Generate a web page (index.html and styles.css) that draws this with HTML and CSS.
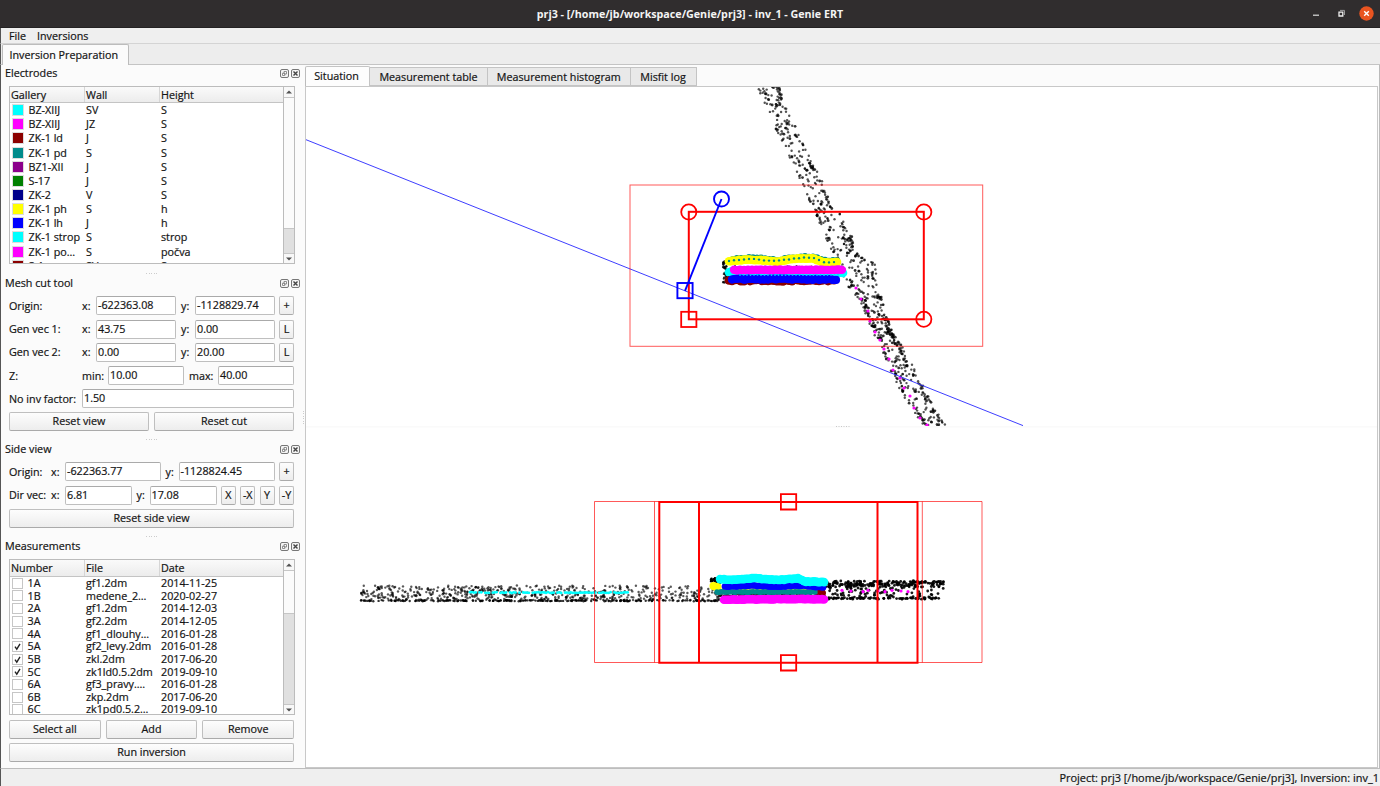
FILE: index.html
```html
<!DOCTYPE html>
<html lang="en">
<head>
<meta charset="utf-8">
<title>Genie ERT</title>
<link rel="stylesheet" href="styles.css">
</head>
<body>
<svg class="defs" width="0" height="0">
  <symbol id="float" viewBox="0 0 9 9"><rect x=".5" y=".5" width="8" height="8" rx="1.5" fill="#f4f4f4" stroke="#777"/><path d="M4 2.5h2.5V5H4zM2.5 4.2h2.3v2.3H2.5z" fill="#fff" stroke="#777" stroke-width=".8"/></symbol>
  <symbol id="shut" viewBox="0 0 9 9"><rect x=".5" y=".5" width="8" height="8" rx="1.5" fill="#f4f4f4" stroke="#777"/><path d="M2.5 2.5l4 4M6.5 2.5l-4 4" stroke="#444" stroke-width="1.4"/></symbol>
  <symbol id="up" viewBox="0 0 6 4"><path d="M0 3.6L3 .4L6 3.6z" fill="#505050"/></symbol>
  <symbol id="down" viewBox="0 0 6 4"><path d="M0 .4L3 3.6L6 .4z" fill="#505050"/></symbol>
  <symbol id="check" viewBox="0 0 10 10"><path d="M2.2 5.2L4.2 8L7.8 2" fill="none" stroke="#222" stroke-width="1.5"/></symbol>
</svg>
<header class="titlebar">
  <span class="caption">prj3 - [/home/jb/workspace/Genie/prj3] - inv_1 - Genie ERT</span>
  <svg class="wm" width="64" height="16" viewBox="0 0 64 16">
    <path d="M3 9.2h6" stroke="#ddd" stroke-width="1.2"/>
    <path d="M29 6.2h3.8v3.8h-3.8z" fill="none" stroke="#eee" stroke-width="1.3"/><path d="M30 4.4h4.5v4.6" fill="none" stroke="#999" stroke-width="1"/>
    <circle cx="56.5" cy="7.5" r="7.2" fill="#e95420"/><path d="M54.2 5.2l4.6 4.6M58.8 5.2l-4.6 4.6" stroke="#fff" stroke-width="1.4"/>
  </svg>
</header>
<nav class="menubar"><span class="m-file">File</span><span class="m-inv">Inversions</span></nav>
<div class="maintabs"><div class="maintab"><span>Inversion Preparation</span></div></div>
<main class="work">
  <aside class="side">
    <section class="dock d1">
      <div class="dtitle"><span>Electrodes</span><svg><use href="#float"/></svg><svg><use href="#shut"/></svg></div>
      <div class="table t1">
        <div class="cols">
          <div class="thead"><span>Gallery</span><span>Wall</span><span>Height</span></div>
          <div class="rows" id="electrodes"></div>
        </div>
        <div class="scroll"><div class="arrow"><svg><use href="#up"/></svg></div><div class="thumb"></div><div class="track"></div><div class="arrow"><svg><use href="#down"/></svg></div></div>
      </div>
      <i class="grip"></i>
    </section>
    <section class="dock d2">
      <div class="dtitle"><span>Mesh cut tool</span><svg><use href="#float"/></svg><svg><use href="#shut"/></svg></div>
      <div class="form">
        <div class="row"><label class="w73">Origin:</label><label class="w14">x:</label><b class="in f80">-622363.08</b><label class="yl">y:</label><b class="in f80">-1128829.74</b><b class="btn sq end">+</b></div>
        <div class="row"><label class="w73">Gen vec 1:</label><label class="w14">x:</label><b class="in f80">43.75</b><label class="yl">y:</label><b class="in f80">0.00</b><b class="btn sq end">L</b></div>
        <div class="row"><label class="w73">Gen vec 2:</label><label class="w14">x:</label><b class="in f80">0.00</b><label class="yl">y:</label><b class="in f80">20.00</b><b class="btn sq end">L</b></div>
        <div class="row"><label class="w73">Z:</label><label class="w26">min:</label><b class="in grow">10.00</b><label class="maxl">max:</label><b class="in grow">40.00</b></div>
        <div class="row"><label class="w73">No inv factor:</label><b class="in grow">1.50</b></div>
        <div class="row gap5"><b class="btn grow">Reset view</b><b class="btn grow">Reset cut</b></div>
      </div>
      <i class="grip"></i>
    </section>
    <section class="dock d3">
      <div class="dtitle"><span>Side view</span><svg><use href="#float"/></svg><svg><use href="#shut"/></svg></div>
      <div class="form">
        <div class="row"><label class="w42">Origin:</label><label class="w14">x:</label><b class="in f95">-622363.77</b><label class="w18">y:</label><b class="in f96">-1128824.45</b><b class="btn sq end">+</b></div>
        <div class="row"><label class="w42">Dir vec:</label><label class="w14">x:</label><b class="in f66">6.81</b><label class="w18">y:</label><b class="in f67">17.08</b><div class="dirs"><b class="btn sq">X</b><b class="btn sq">-X</b><b class="btn sq">Y</b><b class="btn sq">-Y</b></div></div>
        <div class="row"><b class="btn grow">Reset side view</b></div>
      </div>
      <i class="grip"></i>
    </section>
    <section class="dock d4">
      <div class="dtitle"><span>Measurements</span><svg><use href="#float"/></svg><svg><use href="#shut"/></svg></div>
      <div class="table t2">
        <div class="cols">
          <div class="thead"><span>Number</span><span>File</span><span>Date</span></div>
          <div class="rows" id="measurements"></div>
        </div>
        <div class="scroll"><div class="arrow"><svg><use href="#up"/></svg></div><div class="thumb"></div><div class="track"></div><div class="arrow"><svg><use href="#down"/></svg></div></div>
      </div>
      <div class="form f4">
        <div class="row gap5"><b class="btn grow">Select all</b><b class="btn grow">Add</b><b class="btn grow">Remove</b></div>
        <div class="row"><b class="btn grow">Run inversion</b></div>
      </div>
    </section>
    <i class="vgrip"></i>
  </aside>
  <section class="view">
    <div class="tabs"><div class="tab on"><span>Situation</span></div><div class="tab tb2"><span>Measurement table</span></div><div class="tab tb3"><span>Measurement histogram</span></div><div class="tab tb4"><span>Misfit log</span></div></div>
    <div class="pane"><svg id="plot" width="1071" height="679" viewBox="306 87 1071 679">
      <defs><clipPath id="top"><rect x="306" y="87" width="1071" height="339"/></clipPath></defs>
      <rect x="306" y="426" width="1071" height="1.5" fill="#fafafa"/>
      <path d="M836 426.5h14" stroke="#c8c8c8" stroke-dasharray="1 1.5"/>
      <g clip-path="url(#top)">
        <g id="planDots"></g>
        <path d="M306 139.7L1023 425.6" stroke="#2828ff" stroke-width=".9" fill="none"/>
        <rect x="630" y="185" width="352.7" height="161.3" fill="none" stroke="red" stroke-opacity=".65"/>
        <g fill="none" stroke="red" stroke-width="2">
          <rect x="688.8" y="211.8" width="235" height="107.5"/>
          <g stroke-width="1.8"><circle cx="688.8" cy="212" r="7.6"/><circle cx="923.8" cy="212" r="7.6"/><circle cx="923.8" cy="319.3" r="7.6"/><rect x="681.2" y="311.8" width="15.2" height="15.2"/></g>
        </g>
        <g fill="none" stroke="#00f" stroke-width="1.9"><path d="M685 290.8L721.5 199"/><circle cx="721.5" cy="199" r="7.5"/><rect x="677.4" y="283" width="15.2" height="15.2"/></g>
      </g>
      <g id="sideDots"></g>
      <g fill="none" stroke="red">
        <path stroke-opacity=".65" d="M594.5 501.5H982V662.5H594.5zM654.5 501.5v161M922.3 501.5v161"/>
        <path stroke-width="2" d="M659.3 502H917.5V662.7H659.3zM699 502v161M877.5 502v161"/>
        <path stroke-width="1.8" d="M780.9 494.2h15.3v15.3h-15.3zM780.9 655.2h15.3v15.3h-15.3z"/>
      </g>
    </svg></div>
  </section>
</main>
<footer class="status"><span>Project: prj3 [/home/jb/workspace/Genie/prj3], Inversion: inv_1</span></footer>
<script src="app.js"></script>
</body>
</html>
```
FILE: styles.css
```css
* { box-sizing: border-box; }
body { margin: 0; width: 1380px; height: 786px; overflow: hidden; background: #fbfbfb; color: #141414; font: 10.75px/14px "Open Sans", "Noto Sans", sans-serif; -webkit-text-stroke: .2px currentColor; display: flex; flex-direction: column; }
b { font-weight: 400; }
.defs { position: absolute; }
span, label, b { white-space: nowrap; }
.titlebar { height: 28px; flex: none; background: #302d2e; border-bottom: 1px solid #242223; color: #f4f4f4; display: grid; grid-template-columns: 1fr auto 1fr; align-items: center; }
.caption { grid-column: 2; font-weight: 700; font-size: 10.7px; -webkit-text-stroke: 0; }
.wm { justify-self: end; margin-right: 6px; }
.menubar { height: 16px; flex: none; background: #efefef; border-bottom: 1px solid #d4d4d4; border-left: 1px solid #555; padding-left: 8px; display: flex; gap: 11px; align-items: center; }
.maintabs { height: 21px; flex: none; background: #ededed; border-bottom: 1px solid #c4c4c4; border-left: 1px solid #555; display: flex; }
.maintab { width: 127px; height: 21px; margin-left: 1px; background: #fbfbfb; border: 1px solid #bcbcbc; border-bottom: 0; border-radius: 2px 2px 0 0; padding: 3px 0 0 6.5px; }
.work { flex: 1; min-height: 0; display: flex; border-left: 1px solid #555; }
.side { width: 304px; flex: none; position: relative; display: flex; flex-direction: column; }
.dock { position: relative; margin-top: -1px; padding: 1px 10px 0 8px; flex: none; }
.d1 { height: 210px; padding-top: 0; } .d2 { height: 167px; } .d3 { height: 98px; } .d4 { height: 231px; }
.dtitle { height: 18px; margin: 0 -5px 0 -4px; display: flex; align-items: center; gap: 2px; }
.dtitle span { flex: 1; }
.dtitle svg { width: 9px; height: 9px; }
.grip { position: absolute; left: 145px; bottom: 0; width: 13px; height: 1px; background: repeating-linear-gradient(90deg, #ccc 0 1px, transparent 1px 2.5px); }
.vgrip { position: absolute; right: 1px; top: 346px; width: 1px; height: 14px; background: repeating-linear-gradient(#ccc 0 1px, transparent 1px 2.5px); }
.table { width: 286px; border: 1px solid #bcbcbc; background: #fff; display: flex; overflow: hidden; }
.t1 { height: 178px; margin-top: 4px; }
.t2 { height: 156px; margin-top: 4px; }
.cols { flex: 1; overflow: hidden; }
.thead, .tr { display: grid; grid-template-columns: 74px 75px 1fr; align-items: center; }
.thead { height: 16px; background: linear-gradient(#fafafa, #ececec); border-bottom: 1px solid #c4c4c4; }
.thead span { padding-left: 1px; line-height: 17px; height: 15px; border-left: 1px solid #d6d6d6; }
.thead span:first-child { border: 0; }
.tr > span { padding-left: 2px; }
.t1 .tr { height: 14.17px; }
.t2 .thead { height: 17px; }
.t2 .thead span { height: 16px; }
.t2 .tr { height: 12.65px; line-height: 12.6px; }
.tr .first { display: flex; align-items: center; gap: 5px; padding-left: 1.5px; }
.sw { width: 12px; height: 12px; border: .5px solid #ddd; flex: none; }
.box { width: 11px; height: 11px; border: 1px solid #c6c6c6; background: #fff; flex: none; display: flex; }
.box svg { width: 9px; height: 9px; }
.scroll { width: 11px; border-left: 1px solid #bcbcbc; display: flex; flex-direction: column; }
.arrow { height: 10px; background: #f8f8f8; display: flex; align-items: center; justify-content: center; }
.arrow svg { width: 6px; height: 4px; }
.thumb { background: #fbfbfb; border: solid #c6c6c6; border-width: 1px 0; height: 132px; }
.t2 .thumb { height: 44px; }
.track { flex: 1; background: #e0e0e0; }
.arrow:last-child { border-top: 1px solid #c6c6c6; }
.form { padding-top: 2.4px; width: 285px; }
.f4 { padding-top: 2.6px; }
.row { height: 23.2px; display: flex; align-items: center; }
.in, .btn { height: 19px; border: 1px solid #bfbfbf; border-radius: 2px; line-height: 17.6px; }
.in { background: #fff; padding-left: 1px; border-top-color: #aaa; }
.btn { background: linear-gradient(#fdfdfd, #ededed); text-align: center; border-bottom-color: #aaa; }
.grow { flex: 1 1 0; }
.gap5 { gap: 5px; }
.sq { width: 15px; }
.end { margin-left: auto; }
.w73 { width: 73px; } .w14 { width: 14px; } .w26 { width: 26px; } .w42 { width: 42px; }
.yl { width: 19px; padding-left: 5px; } .maxl { width: 34px; padding-left: 5px; } .w18 { width: 18px; padding-left: 5px; }
.f80 { width: 80px; } .f95 { width: 95.5px; } .f96 { width: 96.5px; } .f66 { width: 66.5px; } .f67 { width: 67.5px; }
.dirs { margin-left: auto; display: flex; gap: 4.4px; }
.view { flex: 1; display: flex; flex-direction: column; padding-right: 1px; border-right: 1px solid #bbb; }
.tabs { height: 21px; display: flex; align-items: flex-end; }
.tab { height: 19px; border: 1px solid #c4c4c4; border-left: 0; background: #e9e9e9; text-align: center; line-height: 19.6px; }
.tab.on { width: 65px; height: 20px; background: #fdfdfd; border-left: 1px solid #bcbcbc; border-bottom: 0; border-radius: 2px 2px 0 0; padding-right: 2px; }
.tb2 { width: 118px; } .tb3 { width: 142.5px; } .tb4 { width: 66px; }
.pane { flex: 1; background: #fff; border: 1px solid #c8c8c8; }
.pane svg { display: block; }
.status { height: 18px; flex: none; background: #efefef; border-top: 1px solid #bdbdbd; border-left: 1px solid #555; text-align: right; padding: 2px 1px 0 0; font-size: 10.95px; }
```
FILE: app.js
```js
const el = id => document.getElementById(id);

const electrodes = [
  ['#0ff', 'BZ-XIIJ', 'SV', 'S'], ['#f0f', 'BZ-XIIJ', 'JZ', 'S'], ['#8b0000', 'ZK-1 ld', 'J', 'S'],
  ['#008b8b', 'ZK-1 pd', 'S', 'S'], ['#8b008b', 'BZ1-XII', 'J', 'S'], ['#008000', 'S-17', 'J', 'S'],
  ['#00008b', 'ZK-2', 'V', 'S'], ['#ff0', 'ZK-1 ph', 'S', 'h'], ['#00f', 'ZK-1 lh', 'J', 'h'],
  ['#0ff', 'ZK-1 strop', 'S', 'strop'], ['#f0f', 'ZK-1 po…', 'S', 'počva'], ['#8b0000', 'S-1', 'SV', 'S']];
el('electrodes').innerHTML = electrodes.map(r =>
  `<div class="tr"><span class="first"><i class="sw" style="background:${r[0]}"></i>${r[1]}</span><span>${r[2]}</span><span>${r[3]}</span></div>`).join('');

const measurements = [
  ['1A', 'gf1.2dm', '2014-11-25'], ['1B', 'medene_2…', '2020-02-27'], ['2A', 'gf1.2dm', '2014-12-03'],
  ['3A', 'gf2.2dm', '2014-12-05'], ['4A', 'gf1_dlouhy…', '2016-01-28'], ['5A', 'gf2_levy.2dm', '2016-01-28', 1],
  ['5B', 'zkl.2dm', '2017-06-20', 1], ['5C', 'zk1ld0.5.2dm', '2019-09-10', 1], ['6A', 'gf3_pravy.…', '2016-01-28'],
  ['6B', 'zkp.2dm', '2017-06-20'], ['6C', 'zk1pd0.5.2…', '2019-09-10']];
el('measurements').innerHTML = measurements.map(r =>
  `<div class="tr"><span class="first"><i class="box">${r[3] ? '<svg><use href="#check"/></svg>' : ''}</i>${r[0]}</span><span>${r[1]}</span><span>${r[2]}</span></div>`).join('');

let seed = 7;
const rnd = () => (seed = (seed * 16807) % 2147483647) / 2147483647;
const at = (pts, v) => {
  for (let i = 1; i < pts.length; i++) {
    if (v <= pts[i][0]) {
      const [a, b] = [pts[i - 1], pts[i]];
      return a[1] + (b[1] - a[1]) * (v - a[0]) / (b[0] - a[0]);
    }
  }
  return pts[pts.length - 1][1];
};
const dot = (x, y, r, c, o = 1) => `<circle cx="${x.toFixed(1)}" cy="${y.toFixed(1)}" r="${r}" fill="${c}" opacity="${o}"/>`;
// a string of overlapping dots that follows the polyline pts
const band = (pts, r, c, j = .5, step = 2) => {
  let s = '';
  for (let x = pts[0][0]; x <= pts[pts.length - 1][0]; x += step) s += dot(x, at(pts, x) + (rnd() - .5) * j * 2, r, c);
  return s;
};

// plan view: gallery walls as [y, x]
const left = [[87, 756], [123, 773], [162, 792], [190, 805], [228, 821], [262, 837], [285, 847], [300, 860], [330, 872], [360, 886], [390, 899], [426, 924]];
const right = [[87, 778], [115, 789], [150, 806], [183, 823], [210, 838], [237, 851], [256, 861], [264, 875], [290, 879], [310, 885], [330, 892], [350, 904], [370, 915], [395, 928], [426, 946]];
let p = '';
for (let i = 0; i < 620; i++) {
  const y = 87 + Math.pow(rnd(), .85) * 339, a = at(left, y), b = at(right, y);
  let t = rnd();
  if (rnd() < .22) t = 1 - t * .25; else if (rnd() < .12) t *= .15;
  const x = a + (b - a) * t;
  p += dot(x, y, 1.2, '#000', .68);
  if (rnd() < .2) p += dot(x + rnd() * 3, y + rnd() * 3, 1.4, '#000', .8);
}
for (let i = 0; i < 45; i++) p += dot(723 + rnd() * 4, 261 + rnd() * 22, 1.1, '#000', .8);
[[856,288],[861,299],[868,311],[870,321],[875,332],[880,340],[884,349],[889,359],[893,370],[900,378],[904,388],[910,396],[914,408],[920,418],[927,425]].forEach(m => p += dot(m[0], m[1], 1.6, '#f0f'));
const roof = [[729, 261], [750, 259.5], [778, 261.5], [792, 259], [812, 258], [824, 262.5], [838, 262.5]];
for (let x = 735; x < 845; x += 1.5) p += dot(x, 266 + rnd() * 8, 1, '#222', .9);
p += band([[733, 258.8], [750, 257.5], [778, 260], [790, 257.2], [812, 256.4], [824, 260], [838, 260.5]], 3.2, '#008b8b', .7, 4);
p += band(roof, 4.3, '#ff0', .4);
p += band(roof.map(q => [q[0], q[1] - .5]), 1.2, '#008b8b', .5, 5);
p += band([[729, 272], [843, 272.5]], 4.3, '#0ff', .6);
p += band([[729, 280.5], [836, 280.5]], 4.4, '#8b0000', .9, 3);
p += band([[732, 279], [837, 279.2]], 4.1, '#00f', .7);
p += band([[734, 270], [843.5, 269.8]], 4.2, '#f0f', .4);
p += band([[740, 275], [840, 275]], .9, '#0cf', .2, 3.5);
el('planDots').innerHTML = p;

// side view
let s = '';
for (let i = 0; i < 780; i++) {
  const x = 361 + rnd() * 358, k = rnd();
  const y = k < .3 ? 600.6 + (rnd() - .5) * 1.2 : 585.5 + rnd() * 15;
  s += dot(x, y, 1.2, '#000', k < .3 ? .8 : .65);
}
for (let i = 0; i < 340; i++) {
  const x = 826 + rnd() * 118, k = rnd();
  const y = k < .22 ? 598.4 + (rnd() - .5) * 1.6 : k < .65 ? 581 + rnd() * 6 : 581 + rnd() * 17;
  s += dot(x, y, 1.4, '#000', .9);
}
for (let i = 0; i < 30; i++) s += dot(711 + rnd() * 9, 578 + rnd() * 5, 1.3, '#000');
for (let x = 470; x < 629; x += 1.9) if (rnd() < .85) s += dot(x, 592.2 + rnd() * .8, 1.4, '#0ff');
[842, 851, 863, 868, 878, 885, 892, 901, 908].forEach((x, i) => s += dot(x, 590.3 + (i % 3) * .7, 1.6, '#f0f'));
for (let x = 720; x < 826; x += 1) s += dot(x, 593 + rnd() * 4, 1.3, rnd() < .5 ? '#5a0010' : '#111');
s += dot(821, 592, 4.2, '#8b0000') + dot(823, 593, 3, '#8b0000');
s += band([[713.5, 586], [719, 587.5]], 4, '#ff0', .3);
s += band([[723, 589], [818, 589]], 1.6, '#ff0', .3, 3);
s += band([[717, 592], [816, 592]], 2.7, '#008b8b', .4);
s += band([[725, 586.5], [755, 585.5], [775, 586.8], [800, 585.5], [824, 587.5]], 3.3, '#00f', .4);
s += band([[720, 579.5], [740, 579.5], [755, 578.2], [778, 580], [798, 578.3], [806, 581.5], [825, 582]], 4.3, '#0ff', .4);
s += band([[724, 599.8], [790, 599], [825, 599.3]], 4.3, '#f0f', .3);
el('sideDots').innerHTML = s;
```
